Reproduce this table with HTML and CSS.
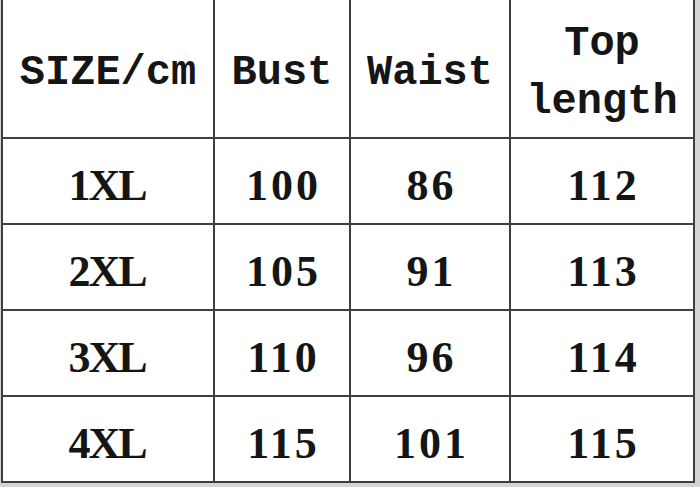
FILE: index.html
```html
<!DOCTYPE html>
<html>
<head>
<meta charset="utf-8">
<link rel="stylesheet" href="styles.css">
</head>
<body>
<div class="chart">
  <div class="cell head">SIZE/cm</div>
  <div class="cell head">Bust</div>
  <div class="cell head">Waist</div>
  <div class="cell head">Top<br>length</div>

  <div class="cell size">1XL</div>
  <div class="cell num">100</div>
  <div class="cell num">86</div>
  <div class="cell num">112</div>

  <div class="cell size">2XL</div>
  <div class="cell num">105</div>
  <div class="cell num">91</div>
  <div class="cell num">113</div>

  <div class="cell size">3XL</div>
  <div class="cell num">110</div>
  <div class="cell num">96</div>
  <div class="cell num">114</div>

  <div class="cell size">4XL</div>
  <div class="cell num">115</div>
  <div class="cell num">101</div>
  <div class="cell num">115</div>
</div>
</body>
</html>
```
FILE: styles.css
```css
html, body {
  margin: 0;
  padding: 0;
}
body {
  background: #d4d4d4;
  width: 700px;
  height: 487px;
  overflow: hidden;
}
.chart {
  margin-left: 1px;
  width: 694px;
  box-sizing: border-box;
  padding: 0 2px 2px 2px;
  background: #3e3e3e;
  display: grid;
  grid-template-columns: 210px 134px 158px 182px;
  grid-template-rows: 137px 84px 84px 84px 84px;
  gap: 2px;
}
.cell {
  background: #ffffff;
  color: #151515;
  display: flex;
  align-items: center;
  justify-content: center;
  text-align: center;
  box-sizing: border-box;
}
.head {
  font-family: "Liberation Mono", "DejaVu Sans Mono", monospace;
  font-weight: bold;
  font-size: 42px;
  line-height: 58px;
  padding-top: 8px;
}
.size, .num {
  font-family: "Liberation Serif", "Times New Roman", serif;
  font-weight: bold;
  font-size: 44px;
  padding-top: 8px;
}
.size {
  letter-spacing: -2px;
  padding-right: 2px;
}
.num {
  letter-spacing: 3px;
  padding-left: 3px;
}
```
